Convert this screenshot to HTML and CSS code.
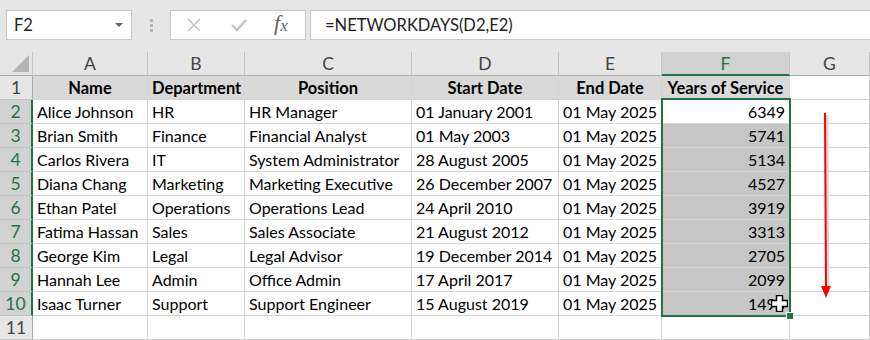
FILE: index.html
```html
<!DOCTYPE html>
<html lang="en">
<head>
    <meta charset="UTF-8">
    <title>NETWORKDAYS</title>
    <link rel="stylesheet" href="styles.css">
</head>
<body>

<div class="app">
    <div class="toolbar">
        <div class="name-box">
            <span>F2</span>
            <span class="caret"></span>
        </div>
        <div class="grip"><i></i><i></i><i></i></div>
        <div class="fx-box">
            <svg class="ico" width="16" height="16" viewBox="0 0 16 16"><path d="M2 2 L14 14 M14 2 L2 14" stroke="#c4c4c4" stroke-width="1.6" fill="none"/></svg>
            <svg class="ico" width="18" height="16" viewBox="0 0 18 16"><path d="M2 8 L7 13 L16 3" stroke="#c4c4c4" stroke-width="2.4" fill="none"/></svg>
            <span class="fx">f<sub>x</sub></span>
        </div>
        <div class="formula">=NETWORKDAYS(D2,E2)</div>
    </div>

    <div class="sheet">
        <div class="corner"><span class="tri"></span></div>
        <div class="colhead">A</div>
        <div class="colhead">B</div>
        <div class="colhead">C</div>
        <div class="colhead">D</div>
        <div class="colhead">E</div>
        <div class="colhead active">F</div>
        <div class="colhead">G</div>

        <div class="rowhead">1</div>
        <div class="cell title">Name</div>
        <div class="cell title">Department</div>
        <div class="cell title">Position</div>
        <div class="cell title">Start Date</div>
        <div class="cell title">End Date</div>
        <div class="cell title">Years of Service</div>
        <div class="cell"></div>

        <div class="rowhead active">2</div>
        <div class="cell">Alice Johnson</div>
        <div class="cell">HR</div>
        <div class="cell">HR Manager</div>
        <div class="cell">01 January 2001</div>
        <div class="cell">01 May 2025</div>
        <div class="cell num">6349</div>
        <div class="cell"></div>

        <div class="rowhead active">3</div>
        <div class="cell">Brian Smith</div>
        <div class="cell">Finance</div>
        <div class="cell">Financial Analyst</div>
        <div class="cell">01 May 2003</div>
        <div class="cell">01 May 2025</div>
        <div class="cell num sel">5741</div>
        <div class="cell"></div>

        <div class="rowhead active">4</div>
        <div class="cell">Carlos Rivera</div>
        <div class="cell">IT</div>
        <div class="cell">System Administrator</div>
        <div class="cell">28 August 2005</div>
        <div class="cell">01 May 2025</div>
        <div class="cell num sel">5134</div>
        <div class="cell"></div>

        <div class="rowhead active">5</div>
        <div class="cell">Diana Chang</div>
        <div class="cell">Marketing</div>
        <div class="cell">Marketing Executive</div>
        <div class="cell">26 December 2007</div>
        <div class="cell">01 May 2025</div>
        <div class="cell num sel">4527</div>
        <div class="cell"></div>

        <div class="rowhead active">6</div>
        <div class="cell">Ethan Patel</div>
        <div class="cell">Operations</div>
        <div class="cell">Operations Lead</div>
        <div class="cell">24 April 2010</div>
        <div class="cell">01 May 2025</div>
        <div class="cell num sel">3919</div>
        <div class="cell"></div>

        <div class="rowhead active">7</div>
        <div class="cell">Fatima Hassan</div>
        <div class="cell">Sales</div>
        <div class="cell">Sales Associate</div>
        <div class="cell">21 August 2012</div>
        <div class="cell">01 May 2025</div>
        <div class="cell num sel">3313</div>
        <div class="cell"></div>

        <div class="rowhead active">8</div>
        <div class="cell">George Kim</div>
        <div class="cell">Legal</div>
        <div class="cell">Legal Advisor</div>
        <div class="cell">19 December 2014</div>
        <div class="cell">01 May 2025</div>
        <div class="cell num sel">2705</div>
        <div class="cell"></div>

        <div class="rowhead active">9</div>
        <div class="cell">Hannah Lee</div>
        <div class="cell">Admin</div>
        <div class="cell">Office Admin</div>
        <div class="cell">17 April 2017</div>
        <div class="cell">01 May 2025</div>
        <div class="cell num sel">2099</div>
        <div class="cell"></div>

        <div class="rowhead active">10</div>
        <div class="cell">Isaac Turner</div>
        <div class="cell">Support</div>
        <div class="cell">Support Engineer</div>
        <div class="cell">15 August 2019</div>
        <div class="cell">01 May 2025</div>
        <div class="cell num sel">1493</div>
        <div class="cell"></div>

        <div class="rowhead">11</div>
        <div class="cell"></div>
        <div class="cell"></div>
        <div class="cell"></div>
        <div class="cell"></div>
        <div class="cell"></div>
        <div class="cell"></div>
        <div class="cell"></div>

        <!-- selection outline + fill handle -->
        <div class="selection"><span class="handle"></span></div>

        <!-- red arrow drawn over the sheet -->
        <svg class="arrow" width="24" height="196" viewBox="0 0 24 196">
            <path d="M12 3 L13 178" stroke="#d8d8d8" stroke-width="3" fill="none"/>
            <path d="M10 1 L11 176" stroke="#ff0000" stroke-width="2" fill="none"/>
            <path d="M6 174 L16 174 L11 186 Z" fill="#ff0000"/>
        </svg>

        <!-- plus cursor -->
        <svg class="cursor" width="17" height="17" viewBox="0 0 17 17">
            <path d="M5.5 0.5 H11.5 V5.5 H16.5 V11.5 H11.5 V16.5 H5.5 V11.5 H0.5 V5.5 H5.5 Z" fill="#fff" stroke="#000" stroke-width="1.4"/>
        </svg>
    </div>
</div>

</body>
</html>
```

FILE: styles.css
```css
body {
    margin: 0;
    font-family: 'Lato', 'Liberation Sans', sans-serif;
    background-color: #ffffff;
}
.app {
    width: 870px;
    height: 340px;
    overflow: hidden;
}
.toolbar {
    height: 52px;
    background-color: #e6e6e6;
    display: flex;
    align-items: flex-start;
    padding-top: 10px;
    box-sizing: border-box;
}
.name-box {
    margin-left: 6px;
    width: 126px;
    height: 30px;
    box-sizing: border-box;
    background-color: #ffffff;
    border: 1px solid #c6c6c6;
    display: flex;
    align-items: center;
    justify-content: space-between;
    padding: 0 8px 0 7px;
    font-size: 16.5px;
    color: #222;
}
.caret {
    width: 0;
    height: 0;
    border-left: 4px solid transparent;
    border-right: 4px solid transparent;
    border-top: 4px solid #666;
}
.grip {
    width: 38px;
    height: 30px;
    display: flex;
    flex-direction: column;
    align-items: center;
    justify-content: center;
    gap: 2px;
}
.grip i {
    width: 3px;
    height: 3px;
    background-color: #b4b4b4;
}
.fx-box {
    width: 136px;
    height: 30px;
    box-sizing: border-box;
    background-color: #ffffff;
    border: 1px solid #c6c6c6;
    display: flex;
    align-items: center;
    padding-left: 15px;
    gap: 28px;
}
.fx {
    font-family: 'Liberation Serif', serif;
    font-style: italic;
    font-size: 22px;
    color: #666;
    margin-left: -2px;
    margin-top: -4px;
}
.fx sub {
    font-size: 17px;
    vertical-align: -1px;
}
.formula {
    margin-left: 4px;
    flex: 1;
    height: 30px;
    box-sizing: border-box;
    background-color: #ffffff;
    border: 1px solid #c6c6c6;
    border-right: none;
    padding-left: 14px;
    font-size: 16.5px;
    line-height: 28px;
    color: #222;
}
.sheet {
    position: relative;
    display: grid;
    grid-template-columns: 33px 115px 97px 167px 147px 103px 128px 80px;
    grid-auto-rows: 24px;
    font-size: 16px;
    color: #000;
}
.corner,
.colhead,
.rowhead {
    background-color: #e6e6e6;
    border-right: 1px solid #c4c4c4;
    border-bottom: 1px solid #ababab;
    box-sizing: border-box;
    color: #444;
    display: flex;
    align-items: center;
    justify-content: center;
    font-size: 17.5px;
}
.corner {
    position: relative;
}
.tri {
    position: absolute;
    right: 3px;
    bottom: 3px;
    width: 0;
    height: 0;
    border-left: 17px solid transparent;
    border-bottom: 17px solid #b4b4b4;
}
.colhead.active {
    background-color: #d2d2d2;
    color: #217346;
    border-bottom: 2px solid #217346;
}
.rowhead {
    border-bottom-color: #c4c4c4;
    border-right-color: #ababab;
}
.rowhead.active {
    background-color: #d2d2d2;
    color: #217346;
    border-right: 2px solid #217346;
}
.cell {
    border-right: 1px solid #d4d4d4;
    border-bottom: 1px solid #d4d4d4;
    box-sizing: border-box;
    padding: 0 4px;
    line-height: 24px;
    white-space: nowrap;
    overflow: hidden;
}
.cell.title {
    background-color: #d9d9d9;
    font-weight: bold;
    text-align: center;
    font-size: 16.5px;
}
.cell.num {
    text-align: right;
}
.cell.sel {
    background-color: #c6c6c6;
}
.selection {
    position: absolute;
    left: 661px;
    top: 46px;
    width: 130px;
    height: 219px;
    box-sizing: border-box;
    border: 2px solid #217346;
}
.handle {
    position: absolute;
    right: -5px;
    bottom: -5px;
    width: 6px;
    height: 6px;
    background-color: #217346;
    border: 1px solid #ffffff;
}
.arrow {
    position: absolute;
    left: 815px;
    top: 60px;
}
.cursor {
    position: absolute;
    left: 771px;
    top: 243px;
}
```
